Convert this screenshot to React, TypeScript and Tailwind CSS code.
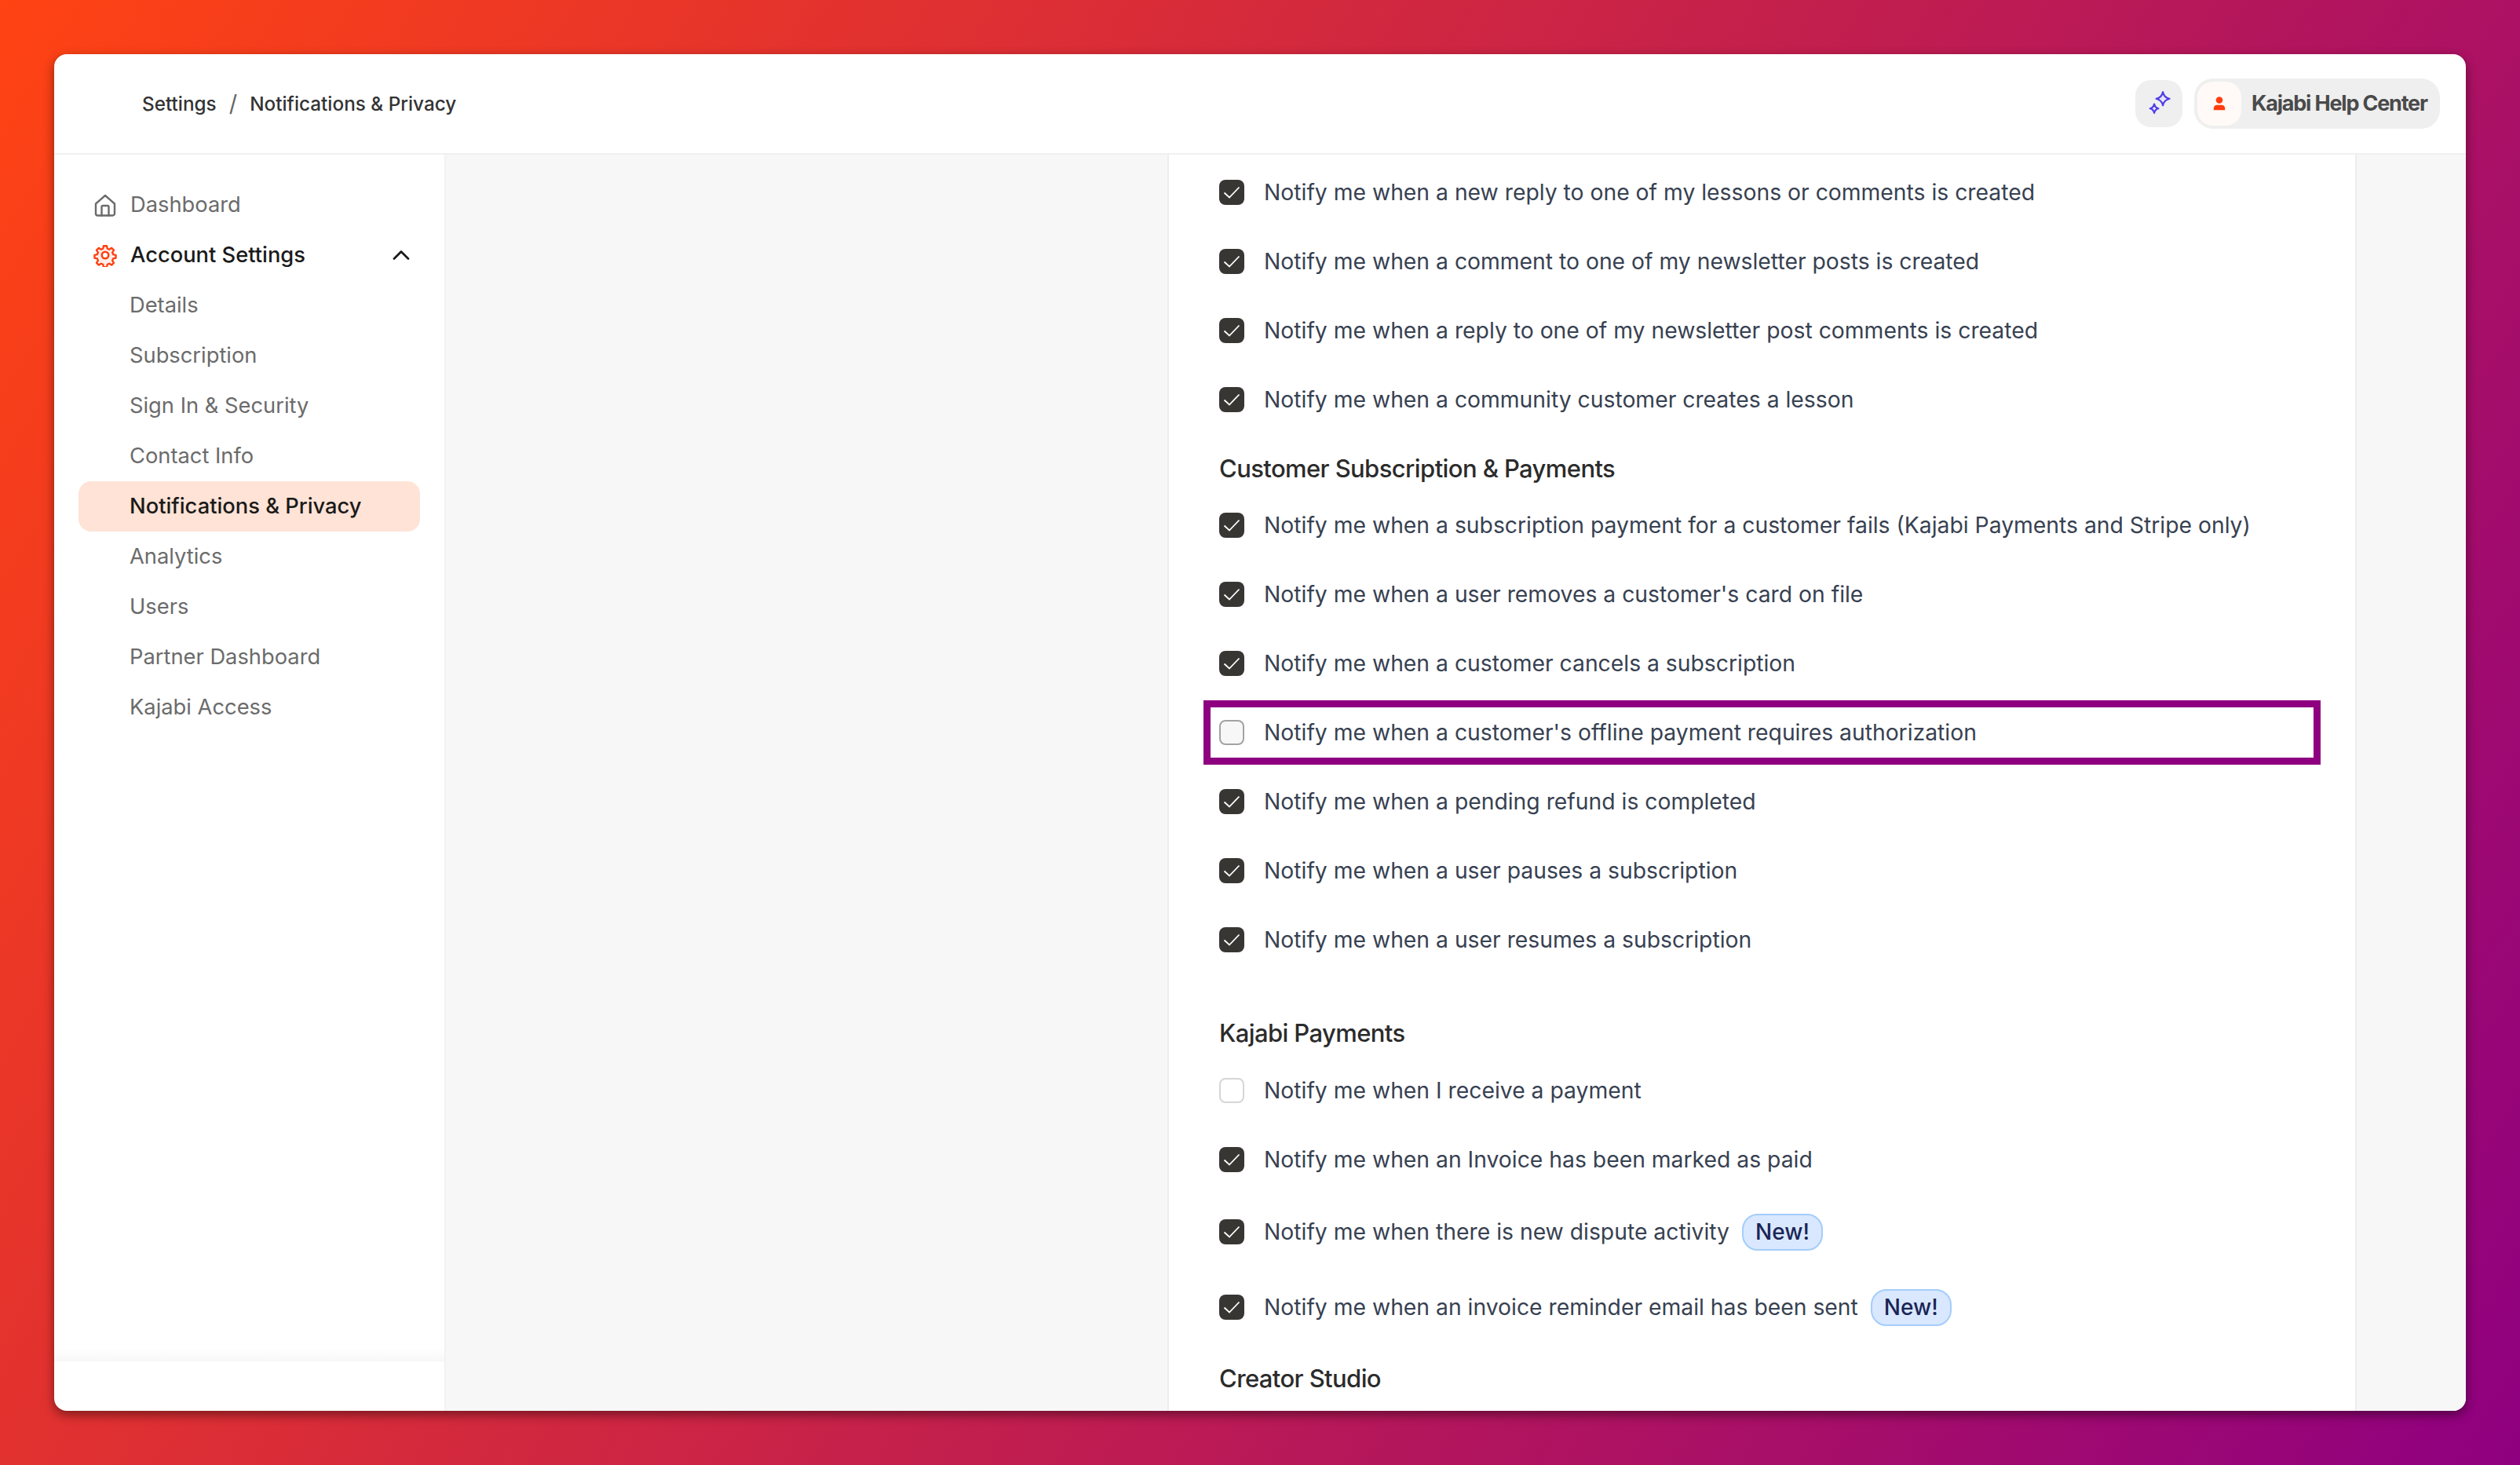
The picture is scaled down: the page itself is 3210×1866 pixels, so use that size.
import { ChevronUp } from "lucide-react";

const sidebarLinks = [
  "Details",
  "Subscription",
  "Sign In & Security",
  "Contact Info",
  "Notifications & Privacy",
  "Analytics",
  "Users",
  "Partner Dashboard",
  "Kajabi Access",
];

function HomeIcon() {
  return (
    <svg width="28" height="29" viewBox="0 0 28 29" fill="none" stroke="#6b6b6b" strokeWidth="2.4" strokeLinejoin="round" strokeLinecap="round">
      <path d="M2 12.5 14 2l12 10.5V25a2.5 2.5 0 0 1-2.5 2.5h-19A2.5 2.5 0 0 1 2 25z" />
      <path d="M9.5 27.5V16.5a1.5 1.5 0 0 1 1.5-1.5h6a1.5 1.5 0 0 1 1.5 1.5v11" />
    </svg>
  );
}

function GearIcon() {
  return (
    <svg width="30" height="30" viewBox="0 0 24 24" fill="#fdeee8" stroke="#ff3d0f" strokeWidth="2" strokeLinejoin="round">
      <path d="M10.2 1.8h3.6l.6 3 2.2.9 2.5-1.7 2.5 2.5-1.7 2.5.9 2.2 3 .6v3.4l-3 .6-.9 2.2 1.7 2.5-2.5 2.5-2.5-1.7-2.2.9-.6 3h-3.6l-.6-3-2.2-.9-2.5 1.7-2.5-2.5 1.7-2.5-.9-2.2-3-.6v-3.4l3-.6.9-2.2-1.7-2.5 2.5-2.5 2.5 1.7 2.2-.9z" transform="translate(12 12) scale(.92) translate(-12 -12)" />
      <circle cx="12" cy="12" r="3.4" fill="#fff" />
    </svg>
  );
}

function SparkleIcon() {
  return (
    <svg width="34" height="34" viewBox="0 0 30 30" fill="#e6e4fb" stroke="#4f3ce8" strokeWidth="2" strokeLinejoin="round">
      <path d="M19.5 2c1 4.500 3 6.700 7.500 7.500-4.500 1-6.500 3-7.500 7.500-1-4.500-3-6.500-7.500-7.500 4.500-.8 6.500-3 7.500-7.500z" />
      <path d="M9.800 15.500c.6 3 1.700 4.300 4.700 5-3 .7-4.100 2-4.700 5-.6-3-1.700-4.300-4.700-5 3-.7 4.100-2 4.700-5z" />
    </svg>
  );
}

function PersonIcon() {
  return (
    <svg width="16" height="18" viewBox="0 0 16 18" fill="#ff3d0f">
      <circle cx="8" cy="4.500" r="4.300" />
      <path d="M.8 17.300v-2.500c0-2.300 1.800-4 4-4h6.400c2.200 0 4 1.700 4 4v2.500z" />
    </svg>
  );
}

function Checkbox(props: { checked?: boolean; hovered?: boolean }) {
  if (!props.checked) {
    return (
      <span
        className={
          props.hovered
            ? "w-8 h-8 shrink-0 rounded-lg border-2 border-[#a3a3a3] bg-[#f7f7f7]"
            : "w-8 h-8 shrink-0 rounded-lg border-2 border-[#d6d6d6] bg-white"
        }
      />
    );
  }
  return (
    <span className="w-8 h-8 shrink-0 rounded-lg bg-[#383633] flex items-center justify-center">
      <svg width="24" height="24" viewBox="0 0 24 24" fill="none" stroke="#fff" strokeWidth="1.800">
        <path d="M2.500 12.500 9 18.500 21.500 5.500" />
      </svg>
    </span>
  );
}

function Row(props: { text: string; checked?: boolean; isNew?: boolean; highlight?: boolean }) {
  return (
    <div className={props.isNew ? "relative h-24 flex items-center gap-[25px]" : "relative h-[88px] flex items-center gap-[25px]"}>
      <Checkbox checked={props.checked} hovered={props.highlight} />
      <span className="text-[28.300px] text-[#374151] whitespace-nowrap">{props.text}</span>
      {props.isNew && (
        <span className="h-[47px] w-[103px] -ml-[9px] flex items-center justify-center rounded-[20px] border-2 border-[#a3cdfb] bg-[#d9e8ff] text-[28px] font-medium text-[#1a2555]">
          New!
        </span>
      )}
      {props.highlight && (
        <div className="absolute left-[-20px] right-[44px] top-[3px] bottom-[3px] border-[9px] border-[#8e0080]" />
      )}
    </div>
  );
}

function Heading(props: { text: string; className: string }) {
  return (
    <div className={"flex items-center " + props.className}>
      <h3 className="text-[31px] font-medium tracking-[-0.6px] text-[#2b2b2b] whitespace-nowrap">{props.text}</h3>
    </div>
  );
}

export default function App() {
  return (
    <div className="h-screen w-full p-[69px] bg-[linear-gradient(121deg,#ff4313,#8f0080)] font-['Inter',sans-serif]">
      <div className="h-full flex flex-col overflow-hidden rounded-[16px] bg-white shadow-[0_5px_14px_rgba(0,0,0,0.45)]">
        <header className="h-[128px] shrink-0 flex items-center justify-between pl-[112px] pr-[33px] border-b-2 border-[#f0f0f0]">
          <div className="flex items-center text-[24.300px] font-medium text-[#333333]">
            <span>Settings</span>
            <span className="mx-[16px] text-[29px] font-normal text-[#666666]">/</span>
            <span>Notifications &amp; Privacy</span>
          </div>
          <div className="flex items-center gap-[15px]">
            <button className="w-[60px] h-[60px] rounded-[20px] bg-[#efefef] flex items-center justify-center">
              <SparkleIcon />
            </button>
            <div className="h-16 w-[313px] flex items-center gap-[13px] rounded-3xl bg-[#efefef] pl-1">
              <span className="w-14 h-14 rounded-[20px] bg-[#fffaf7] flex items-center justify-center">
                <PersonIcon />
              </span>
              <span className="text-[27px] font-bold tracking-[-1.2px] text-[#4a4a4a] whitespace-nowrap">Kajabi Help Center</span>
            </div>
          </div>
        </header>

        <div className="flex-1 flex min-h-0">
          <aside className="w-[499px] shrink-0 flex flex-col border-r-2 border-[#f2f2f2]">
            <nav className="flex-1 pt-[32px] px-[31px] text-[27.300px] text-[#6b6b6b]">
              <div className="h-16 flex items-center gap-[18px] pl-[20px]">
                <HomeIcon />
                <span>Dashboard</span>
              </div>
              <div className="h-16 flex items-center gap-[17px] pl-[19px] pr-[6px] font-medium text-[#1a1a1a]">
                <GearIcon />
                <span className="flex-1">Account Settings</span>
                <ChevronUp size={36} strokeWidth={1.800} />
              </div>
              {sidebarLinks.map((link) => (
                <div
                  key={link}
                  className={
                    link === "Notifications & Privacy"
                      ? "h-16 flex items-center pl-[65px] rounded-2xl bg-[#fee3d6] font-medium text-[#1a1a1a]"
                      : "h-16 flex items-center pl-[65px]"
                  }
                >
                  {link}
                </div>
              ))}
            </nav>
            <div className="h-4 bg-gradient-to-b from-white to-[#f8f8f8]" />
            <div className="h-16 shrink-0 border-t border-[#f4f4f4]" />
          </aside>

          <main className="flex-1 min-w-0 bg-[#f7f7f7] overflow-hidden">
            <div className="ml-[919px] w-[1515px] h-full overflow-hidden bg-white border-x-2 border-[#ededed] pl-[64px] pt-[4px]">
              <Row checked text="Notify me when a new reply to one of my lessons or comments is created" />
              <Row checked text="Notify me when a comment to one of my newsletter posts is created" />
              <Row checked text="Notify me when a reply to one of my newsletter post comments is created" />
              <Row checked text="Notify me when a community customer creates a lesson" />
              <Heading text="Customer Subscription & Payments" className="h-[72px] pt-4" />
              <Row checked text="Notify me when a subscription payment for a customer fails (Kajabi Payments and Stripe only)" />
              <Row checked text="Notify me when a user removes a customer's card on file" />
              <Row checked text="Notify me when a customer cancels a subscription" />
              <Row highlight text="Notify me when a customer's offline payment requires authorization" />
              <Row checked text="Notify me when a pending refund is completed" />
              <Row checked text="Notify me when a user pauses a subscription" />
              <Row checked text="Notify me when a user resumes a subscription" />
              <Heading text="Kajabi Payments" className="h-[104px] pt-[46px]" />
              <Row text="Notify me when I receive a payment" />
              <Row checked text="Notify me when an Invoice has been marked as paid" />
              <Row checked isNew text="Notify me when there is new dispute activity" />
              <Row checked isNew text="Notify me when an invoice reminder email has been sent" />
              <Heading text="Creator Studio" className="h-[86px]" />
            </div>
          </main>
        </div>
      </div>
    </div>
  );
}
